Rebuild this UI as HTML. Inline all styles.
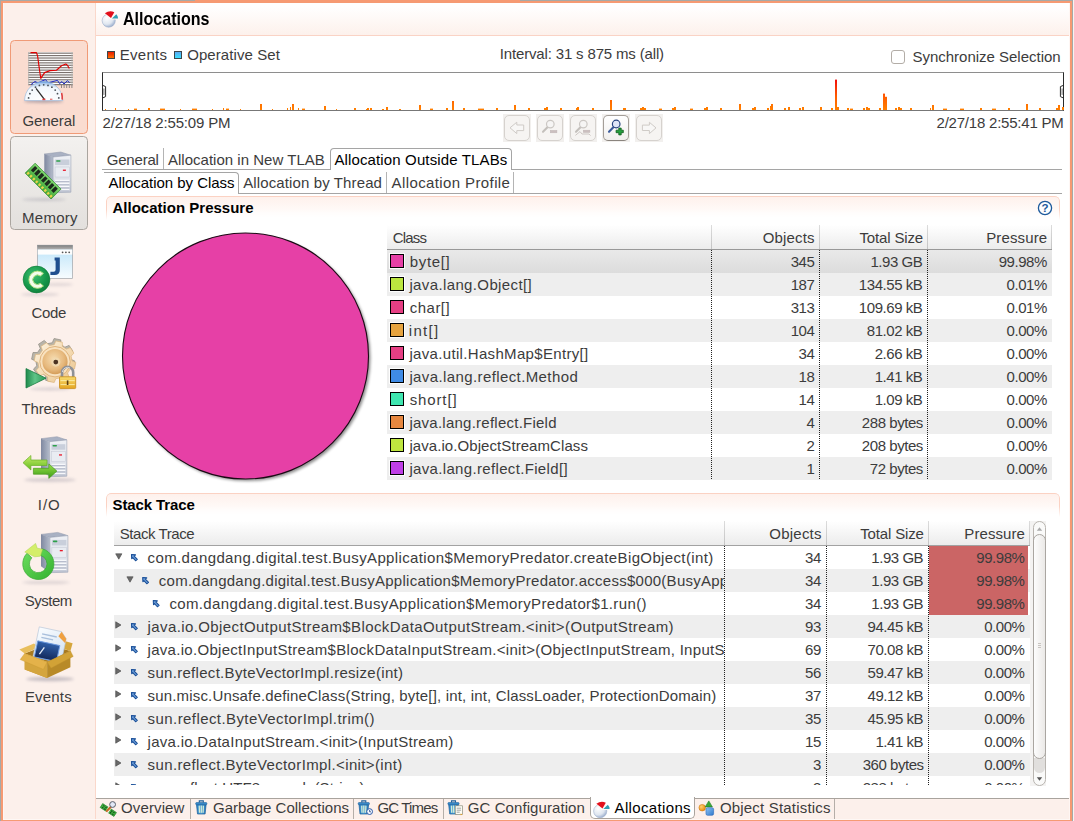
<!DOCTYPE html><html><head><meta charset="utf-8"><title>Allocations</title><style>
*{box-sizing:border-box;margin:0;padding:0}
html,body{width:1074px;height:821px;overflow:hidden}
body{position:relative;background:#fcf0eb;font-family:"Liberation Sans",sans-serif;font-size:15px;color:#3c3c3c;}
.a{position:absolute}
.t{position:absolute;white-space:nowrap;line-height:18px;height:18px}
.b{font-weight:bold;color:#000}
svg{position:absolute;overflow:visible}
</style></head><body>
<div class="a" style="left:96px;top:36px;width:973px;height:762px;background:#fff"></div>
<div class="a" style="left:96px;top:3px;width:973px;height:32px;background:linear-gradient(#ffffff 10%,#fdf1ec)"></div>
<div class="a" style="left:96px;top:35px;width:973px;height:1px;background:#fad3c5"></div>
<div class="a" style="left:95px;top:3px;width:1px;height:816px;background:#fad8cb"></div>
<div class="a" style="left:1px;top:1px;width:1072px;height:2px;background:#f69a73"></div>
<div class="a" style="left:0px;top:0px;width:1073px;height:1px;background:#a6a9a7"></div>
<div class="a" style="left:195px;top:0px;width:325px;height:1px;background:#f69a73"></div>
<div class="a" style="left:0px;top:0px;width:1px;height:821px;background:#a6a9a7"></div>
<div class="a" style="left:1px;top:1px;width:2px;height:820px;background:#f69a73"></div>
<div class="a" style="left:3px;top:3px;width:1px;height:816px;background:#fef6f3"></div>
<div class="a" style="left:1069px;top:3px;width:1px;height:816px;background:#fef6f3"></div>
<div class="a" style="left:1070px;top:1px;width:2px;height:820px;background:#f69a73"></div>
<div class="a" style="left:1072px;top:0px;width:1px;height:821px;background:#a6a9a7"></div>
<div class="a" style="left:1073px;top:0px;width:1px;height:821px;background:#f6f4f2"></div>
<div class="a" style="left:3px;top:819px;width:1067px;height:1px;background:#fef8f5"></div>
<div class="a" style="left:1px;top:820px;width:1071px;height:1px;background:#f69a73"></div>
<svg style="left:0;top:0" width="1" height="1"><defs><radialGradient id="g1" cx=".35" cy=".3" r=".8"><stop offset="0" stop-color="#fff"/><stop offset=".6" stop-color="#dfe6f0"/><stop offset="1" stop-color="#8aa0c4"/></radialGradient></defs><circle cx="108.7" cy="20.6" r="6.6" fill="url(#g1)" stroke="#9fb0cc" stroke-width=".6"/><path d="M109.9 19.400000000000002 L104.5 13.000000000000002 A9 9 0 0 1 117.9 19.400000000000002Z" fill="#fff8f5"/><path d="M111.0 18.0 L104.9 13.200000000000001 Q109.7 9.8 114.3 12.200000000000001Z" fill="#e2101c"/><path d="M111.9 18.400000000000002 L116.3 14.200000000000001 Q118.3 16.200000000000003 118.10000000000001 18.400000000000002Z" fill="#2f9fb4"/></svg>
<div class="t b" style="left:122.6px;top:8px;font-size:19px;line-height:22px;height:22px;transform-origin:0 0;transform:scaleX(.845)">Allocations</div>
<div class="a" style="left:10px;top:40px;width:78px;height:93.5px;background:#fadcd0;border:1px solid #f09a76;border-radius:4.5px"></div>
<div class="a" style="left:10px;top:136px;width:78px;height:93.5px;background:linear-gradient(#f3f1ef,#e3e0dd);border:1px solid #aaa59f;border-radius:4.5px"></div>
<svg style="left:0;top:0" width="1" height="1"><defs><radialGradient id="g2" cx=".5" cy="1" r="1"><stop offset="0" stop-color="#ffffff"/><stop offset=".72" stop-color="#f2f7fc"/><stop offset=".9" stop-color="#a9c8ec"/><stop offset="1" stop-color="#4f8cd8"/></radialGradient><filter id="f3" x="-30%" y="-100%" width="160%" height="300%"><feGaussianBlur stdDeviation="1.6"/></filter></defs><rect x="28" y="52" width="45" height="33" fill="#fff"/><rect x="28" y="52.60" width="45" height="1.15" fill="#7a726e"/><rect x="28" y="55.02" width="45" height="1.15" fill="#7a726e"/><rect x="28" y="57.44" width="45" height="1.15" fill="#7a726e"/><rect x="28" y="59.86" width="45" height="1.15" fill="#7a726e"/><rect x="28" y="62.28" width="45" height="1.15" fill="#7a726e"/><rect x="28" y="64.70" width="45" height="1.15" fill="#7a726e"/><rect x="28" y="67.12" width="45" height="1.15" fill="#7a726e"/><rect x="28" y="69.54" width="45" height="1.15" fill="#7a726e"/><rect x="28" y="71.96" width="45" height="1.15" fill="#7a726e"/><rect x="28" y="74.38" width="45" height="1.15" fill="#7a726e"/><rect x="28" y="76.80" width="45" height="1.15" fill="#7a726e"/><rect x="28" y="79.22" width="45" height="1.15" fill="#7a726e"/><rect x="28" y="81.64" width="45" height="1.15" fill="#7a726e"/><rect x="28" y="84.06" width="45" height="1.15" fill="#7a726e"/><rect x="28" y="52" width="1.2" height="33" fill="#bdb6b2" opacity=".7"/><rect x="71.5" y="52" width="1.2" height="33" fill="#bdb6b2" opacity=".7"/><rect x="61.0" y="85" width="1" height="3" fill="#8c8684"/><rect x="63.6" y="85" width="1" height="3" fill="#8c8684"/><rect x="66.2" y="85" width="1" height="3" fill="#8c8684"/><rect x="68.8" y="85" width="1" height="3" fill="#8c8684"/><rect x="71.4" y="85" width="1" height="3" fill="#8c8684"/><path d="M30.5 52.6 L36.5 52.6 L37.6 56 L39.8 72 L40.8 78.4 L44.6 72.6 L50 70.6 L56.5 70.2 L61.5 65.8 L65.8 64 L67.6 65.4 L69.3 68.6" fill="none" stroke="#e00000" stroke-width="1.15" stroke-linejoin="round"/><path d="M31 84.5 L35 81.5 L38 83 L42 81 L45.5 79.6 L48 82.8 L51 82 L55 81 L57.5 80.4 L59.5 83.6 L62 81.6 L64 84 L67.5 80.6 L69.5 82.8" fill="none" stroke="#1c28c8" stroke-width="1"/><ellipse cx="43.7" cy="101.2" rx="19.5" ry="1.6" fill="#50506a" opacity="0.45" filter="url(#f3)"/><path d="M24.6 100.6 A19.1 19.1 0 0 1 62.8 100.6Z" fill="url(#g2)" stroke="#8fb3dc" stroke-width=".6"/><circle cx="28.6" cy="97.9" r=".9" fill="#4a5058"/><circle cx="29.9" cy="93.7" r=".9" fill="#4a5058"/><circle cx="32.2" cy="90.1" r=".9" fill="#4a5058"/><circle cx="35.5" cy="87.2" r=".9" fill="#4a5058"/><circle cx="39.4" cy="85.4" r=".9" fill="#4a5058"/><circle cx="43.7" cy="84.8" r=".9" fill="#4a5058"/><circle cx="48.0" cy="85.4" r=".9" fill="#4a5058"/><circle cx="51.9" cy="87.2" r=".9" fill="#4a5058"/><circle cx="55.2" cy="90.1" r=".9" fill="#4a5058"/><circle cx="57.5" cy="93.7" r=".9" fill="#4a5058"/><circle cx="58.8" cy="97.9" r=".9" fill="#4a5058"/><path d="M61.6 93 A18 18 0 0 1 62.2 99.6" stroke="#e04040" stroke-width="1.6" fill="none"/><path d="M36 88.4 L44.4 99.4" stroke="#2a2a2a" stroke-width="1.3"/><rect x="42.4" y="98.6" width="3" height="1.6" fill="#e04040"/><rect x="50" y="98.6" width="2.4" height="1.4" fill="#e88080"/></svg>
<svg style="left:0;top:0" width="1" height="1"><defs><filter id="f4" x="-30%" y="-100%" width="160%" height="300%"><feGaussianBlur stdDeviation="1.6"/></filter><linearGradient id="g5" x1="0" x2="1"><stop offset="0" stop-color="#7f88a0"/><stop offset="1" stop-color="#b4bccb"/></linearGradient><linearGradient id="g6" x1="0" x2="0" y1="0" y2="1"><stop offset="0" stop-color="#eef0f5"/><stop offset=".6" stop-color="#dfe3ea"/><stop offset="1" stop-color="#c4c9d6"/></linearGradient><linearGradient id="g7" x1="0" x2="0" y1="0" y2="1"><stop offset="0" stop-color="#7fd870"/><stop offset="1" stop-color="#3fa838"/></linearGradient></defs><ellipse cx="44" cy="199.5" rx="22" ry="1.5" fill="#50506a" opacity="0.22" filter="url(#f4)"/><path d="M44.3 154 L60.792 152 L70.9 155.2 L53.077999999999996 157Z" fill="#a9b1c3" stroke="#8e96ab" stroke-width=".5"/><path d="M44.3 154 L53.077999999999996 157 L53.077999999999996 192.7 L44.3 186.2Z" fill="url(#g5)"/><path d="M53.077999999999996 157 L70.9 155.2 L70.9 192.2 L53.077999999999996 192.7Z" fill="url(#g6)" stroke="#9aa2b6" stroke-width=".6"/><rect x="55.077999999999996" y="159.5" width="14.32200000000001" height="5.5" fill="#c9cfdb"/><rect x="56.077999999999996" y="160.2" width="4.5" height="1.6" rx=".8" fill="#2ca04a"/><rect x="55.077999999999996" y="167" width="14.32200000000001" height="10" fill="#e9ecf2" stroke="#c3c8d4" stroke-width=".5"/><rect x="62.8801" y="169.6" width="3" height="1.3" fill="#e81828"/><rect x="55.077999999999996" y="179.7" width="14.32200000000001" height="1.5" fill="#f7f8fb"/><rect x="55.077999999999996" y="181.2" width="14.32200000000001" height=".8" fill="#aeb5c6"/><rect x="55.077999999999996" y="182.79999999999998" width="14.32200000000001" height="1.5" fill="#f7f8fb"/><rect x="55.077999999999996" y="184.29999999999998" width="14.32200000000001" height=".8" fill="#aeb5c6"/><rect x="55.077999999999996" y="185.89999999999998" width="14.32200000000001" height="1.5" fill="#f7f8fb"/><rect x="55.077999999999996" y="187.39999999999998" width="14.32200000000001" height=".8" fill="#aeb5c6"/><rect x="55.077999999999996" y="189.0" width="14.32200000000001" height="1.5" fill="#f7f8fb"/><rect x="55.077999999999996" y="190.5" width="14.32200000000001" height=".8" fill="#aeb5c6"/><g transform="translate(43.1 181.1) rotate(45)"><rect x="-18.3" y="-7" width="36.6" height="14" fill="url(#g7)" stroke="#2f8a2c" stroke-width=".7"/><rect x="-16.40" y="-5" width="3.4" height="6" fill="#1d2a1c"/><rect x="-11.60" y="-5" width="3.4" height="6" fill="#1d2a1c"/><rect x="-6.80" y="-5" width="3.4" height="6" fill="#1d2a1c"/><rect x="-2.00" y="-5" width="3.4" height="6" fill="#1d2a1c"/><rect x="2.80" y="-5" width="3.4" height="6" fill="#1d2a1c"/><rect x="7.60" y="-5" width="3.4" height="6" fill="#1d2a1c"/><rect x="12.40" y="-5" width="3.4" height="6" fill="#1d2a1c"/><rect x="-17.20" y="3.8" width="2.2" height="2.6" fill="#e8d24a"/><rect x="-13.15" y="3.8" width="2.2" height="2.6" fill="#e8d24a"/><rect x="-9.10" y="3.8" width="2.2" height="2.6" fill="#e8d24a"/><rect x="-5.05" y="3.8" width="2.2" height="2.6" fill="#e8d24a"/><rect x="-1.00" y="3.8" width="2.2" height="2.6" fill="#e8d24a"/><rect x="3.05" y="3.8" width="2.2" height="2.6" fill="#e8d24a"/><rect x="7.10" y="3.8" width="2.2" height="2.6" fill="#e8d24a"/><rect x="11.15" y="3.8" width="2.2" height="2.6" fill="#e8d24a"/><rect x="15.20" y="3.8" width="2.2" height="2.6" fill="#e8d24a"/></g></svg>
<svg style="left:0;top:0" width="1" height="1"><defs><filter id="f8" x="-30%" y="-100%" width="160%" height="300%"><feGaussianBlur stdDeviation="1.6"/></filter><filter id="f9" x="-30%" y="-100%" width="160%" height="300%"><feGaussianBlur stdDeviation="1.6"/></filter><linearGradient id="g10" x1="0" x2="0" y1="0" y2="1"><stop offset="0" stop-color="#b9e2f8"/><stop offset="1" stop-color="#f7fcff"/></linearGradient><linearGradient id="g11" x1="0" x2="0" y1="0" y2="1"><stop offset="0" stop-color="#7e7e7e"/><stop offset="1" stop-color="#b4b4b4"/></linearGradient><radialGradient id="g12" cx=".4" cy=".35" r=".75"><stop offset="0" stop-color="#3fbf72"/><stop offset=".6" stop-color="#16984a"/><stop offset="1" stop-color="#0e7a3a"/></radialGradient></defs><ellipse cx="58" cy="284.5" rx="15" ry="1.3" fill="#50506a" opacity="0.18" filter="url(#f8)"/><ellipse cx="40" cy="294.5" rx="19" ry="1.3" fill="#50506a" opacity="0.2" filter="url(#f9)"/><rect x="37.4" y="245.2" width="35.2" height="33.2" fill="url(#g10)" stroke="#a0a4a8" stroke-width=".7"/><rect x="37.4" y="245.2" width="35.2" height="4.4" fill="url(#g11)"/><rect x="37.8" y="249.6" width="34.4" height="5" fill="#fdfdfd"/><circle cx="62.6" cy="252.3" r=".9" fill="#555"/><circle cx="65.9" cy="252.3" r=".9" fill="#555"/><circle cx="69.2" cy="252.3" r=".9" fill="#555"/><path d="M54.6 257.6 L59.8 257.6 L59.8 270.2 Q59.8 275 54.6 275 L50.4 275 L50.4 271.8 L53.6 271.8 Q55.6 271.8 55.6 269.8 L55.6 260.4 L54.6 260.4Z" fill="#1f4f8f"/><circle cx="36.5" cy="279.5" r="13.4" fill="url(#g12)" stroke="#0f7a38" stroke-width=".6"/><path d="M43.4 273.4 A8.6 8.6 0 1 0 43.4 286 L40.4 283.4 A4.7 4.7 0 1 1 40.4 276Z" fill="#f4fcec" stroke="#b4e080" stroke-width="1"/></svg>
<svg style="left:0;top:0" width="1" height="1"><defs><radialGradient id="g13" cx=".45" cy=".4" r=".6"><stop offset="0" stop-color="#f6dcb0"/><stop offset=".7" stop-color="#e6b87c"/><stop offset="1" stop-color="#d49c58"/></radialGradient><linearGradient id="g14" x1="0" x2="1" y1="0" y2="1"><stop offset="0" stop-color="#fff4e0"/><stop offset="1" stop-color="#eac48c"/></linearGradient><linearGradient id="g15" x1="0" x2="1" y1="0" y2="0"><stop offset="0" stop-color="#1e8a4c"/><stop offset=".45" stop-color="#5fc487"/><stop offset="1" stop-color="#2a9a58"/></linearGradient><linearGradient id="g16" x1="0" x2="0" y1="0" y2="1"><stop offset="0" stop-color="#f8dc70"/><stop offset="1" stop-color="#e4a420"/></linearGradient><filter id="f17" x="-30%" y="-100%" width="160%" height="300%"><feGaussianBlur stdDeviation="1.6"/></filter></defs><ellipse cx="50" cy="389" rx="20" ry="1.4" fill="#50506a" opacity="0.2" filter="url(#f17)"/><path d="M74.8 361.0 L73.4 367.7 L68.9 367.7 L66.1 371.8 L67.9 376.0 L62.1 379.8 L58.9 376.5 L54.1 377.5 L52.3 381.7 L45.6 380.3 L45.6 375.8 L41.5 373.0 L37.3 374.8 L33.5 369.0 L36.8 365.8 L35.8 361.0 L31.6 359.2 L33.0 352.5 L37.5 352.5 L40.3 348.4 L38.5 344.2 L44.3 340.4 L47.5 343.7 L52.3 342.7 L54.1 338.5 L60.8 339.9 L60.8 344.4 L64.9 347.2 L69.1 345.4 L72.9 351.2 L69.6 354.4 L70.6 359.2Z" fill="#b9b5aa" stroke="#8e8a80" stroke-width=".7" stroke-linejoin="round"/><path d="M75.8 362.5 L74.5 369.0 L70.3 369.1 L67.6 373.1 L69.1 377.0 L63.6 380.6 L60.6 377.8 L55.8 378.7 L54.2 382.5 L47.7 381.2 L47.6 377.0 L43.6 374.3 L39.7 375.8 L36.1 370.3 L38.9 367.3 L38.0 362.5 L34.2 360.9 L35.5 354.4 L39.7 354.3 L42.4 350.3 L40.9 346.4 L46.4 342.8 L49.4 345.6 L54.2 344.7 L55.8 340.9 L62.3 342.2 L62.4 346.4 L66.4 349.1 L70.3 347.6 L73.9 353.1 L71.1 356.1 L72.0 360.9Z" fill="url(#g14)" stroke="#ddb47c" stroke-width=".7" stroke-linejoin="round"/><circle cx="55" cy="361.7" r="15.2" fill="#f8e2c0" stroke="#dcae74" stroke-width=".9"/><circle cx="55" cy="361.7" r="12.6" fill="url(#g13)"/><circle cx="55.8" cy="362.09999999999997" r="4.6" fill="#f0d8b0" opacity=".9"/><circle cx="55.8" cy="362.09999999999997" r="2.4" fill="#4a3222"/><path d="M26 368.6 L46 378.2 L26 388Z" fill="url(#g15)" stroke="#1d7e44" stroke-width=".8" stroke-linejoin="round"/><path d="M62 377.5 L62 372.4 A5.6 5.6 0 0 1 73.2 372.4 L73.2 377.5" fill="none" stroke="#8f9196" stroke-width="2.6"/><path d="M62.4 372 A5.2 5.2 0 0 1 70 368" fill="none" stroke="#d8dadc" stroke-width="1"/><rect x="59.5" y="376.8" width="16.2" height="11.8" rx="1" fill="url(#g16)" stroke="#c88a18" stroke-width=".8"/><path d="M60.5 380.6h14.2M60.5 384.6h14.2" stroke="#fbeaa0" stroke-width="1"/><rect x="66.8" y="380.4" width="1.6" height="4.6" fill="#5a3c10"/></svg>
<svg style="left:0;top:0" width="1" height="1"><defs><filter id="f18" x="-30%" y="-100%" width="160%" height="300%"><feGaussianBlur stdDeviation="1.6"/></filter><linearGradient id="g19" x1="0" x2="1"><stop offset="0" stop-color="#7f88a0"/><stop offset="1" stop-color="#b4bccb"/></linearGradient><linearGradient id="g20" x1="0" x2="0" y1="0" y2="1"><stop offset="0" stop-color="#eef0f5"/><stop offset=".6" stop-color="#dfe3ea"/><stop offset="1" stop-color="#c4c9d6"/></linearGradient><linearGradient id="g21" x1="0" x2="0" y1="0" y2="1"><stop offset="0" stop-color="#c8ec68"/><stop offset="1" stop-color="#62bc20"/></linearGradient><linearGradient id="g22" x1="0" x2="0" y1="0" y2="1"><stop offset="0" stop-color="#98e048"/><stop offset="1" stop-color="#3e9e18"/></linearGradient></defs><ellipse cx="50" cy="480" rx="26" ry="2" fill="#50506a" opacity="0.22" filter="url(#f18)"/><path d="M41 438.7 L56.996 436.7 L66.8 439.9 L49.514 441.7Z" fill="#a9b1c3" stroke="#8e96ab" stroke-width=".5"/><path d="M41 438.7 L49.514 441.7 L49.514 476.7 L41 470.2Z" fill="url(#g19)"/><path d="M49.514 441.7 L66.8 439.9 L66.8 476.2 L49.514 476.7Z" fill="url(#g20)" stroke="#9aa2b6" stroke-width=".6"/><rect x="51.514" y="444.2" width="13.785999999999994" height="5.5" fill="#c9cfdb"/><rect x="52.514" y="444.9" width="4.5" height="1.6" rx=".8" fill="#2ca04a"/><rect x="51.514" y="451.7" width="13.785999999999994" height="10" fill="#e9ecf2" stroke="#c3c8d4" stroke-width=".5"/><rect x="59.0213" y="454.3" width="3" height="1.3" fill="#e81828"/><rect x="51.514" y="463.7" width="13.785999999999994" height="1.5" fill="#f7f8fb"/><rect x="51.514" y="465.2" width="13.785999999999994" height=".8" fill="#aeb5c6"/><rect x="51.514" y="466.8" width="13.785999999999994" height="1.5" fill="#f7f8fb"/><rect x="51.514" y="468.3" width="13.785999999999994" height=".8" fill="#aeb5c6"/><rect x="51.514" y="469.9" width="13.785999999999994" height="1.5" fill="#f7f8fb"/><rect x="51.514" y="471.4" width="13.785999999999994" height=".8" fill="#aeb5c6"/><rect x="51.514" y="473.0" width="13.785999999999994" height="1.5" fill="#f7f8fb"/><rect x="51.514" y="474.5" width="13.785999999999994" height=".8" fill="#aeb5c6"/><path d="M47 460 L30.9 460 L30.9 455.5 L23 462.7 L30.9 470 L30.9 465.5 L47 465.5Z" fill="url(#g21)" stroke="#6ab02a" stroke-width=".7" stroke-linejoin="round"/><path d="M33.4 468.3 L48.8 468.3 L48.8 463.9 L56.9 471.1 L48.8 478.4 L48.8 474.2 L33.4 474.2Z" fill="url(#g22)" stroke="#4a9a1c" stroke-width=".7" stroke-linejoin="round"/></svg>
<svg style="left:0;top:0" width="1" height="1"><defs><filter id="f23" x="-30%" y="-100%" width="160%" height="300%"><feGaussianBlur stdDeviation="1.6"/></filter><linearGradient id="g24" x1="0" x2="1"><stop offset="0" stop-color="#7f88a0"/><stop offset="1" stop-color="#b4bccb"/></linearGradient><linearGradient id="g25" x1="0" x2="0" y1="0" y2="1"><stop offset="0" stop-color="#eef0f5"/><stop offset=".6" stop-color="#dfe3ea"/><stop offset="1" stop-color="#c4c9d6"/></linearGradient><linearGradient id="g26" x1="0" x2="1" y1="0" y2="1"><stop offset="0" stop-color="#6ee060"/><stop offset="1" stop-color="#34b030"/></linearGradient></defs><ellipse cx="46" cy="582.5" rx="24" ry="1.6" fill="#50506a" opacity="0.18" filter="url(#f23)"/><path d="M41 534.4 L57.678 532.4 L67.9 535.6 L49.877 537.4Z" fill="#a9b1c3" stroke="#8e96ab" stroke-width=".5"/><path d="M41 534.4 L49.877 537.4 L49.877 572.6999999999999 L41 566.1999999999999Z" fill="url(#g24)"/><path d="M49.877 537.4 L67.9 535.6 L67.9 572.1999999999999 L49.877 572.6999999999999Z" fill="url(#g25)" stroke="#9aa2b6" stroke-width=".6"/><rect x="51.877" y="539.9" width="14.523000000000003" height="5.5" fill="#c9cfdb"/><rect x="52.877" y="540.6" width="4.5" height="1.6" rx=".8" fill="#2ca04a"/><rect x="51.877" y="547.4" width="14.523000000000003" height="10" fill="#e9ecf2" stroke="#c3c8d4" stroke-width=".5"/><rect x="59.78965000000001" y="550.0" width="3" height="1.3" fill="#e81828"/><rect x="51.877" y="559.6999999999999" width="14.523000000000003" height="1.5" fill="#f7f8fb"/><rect x="51.877" y="561.1999999999999" width="14.523000000000003" height=".8" fill="#aeb5c6"/><rect x="51.877" y="562.8" width="14.523000000000003" height="1.5" fill="#f7f8fb"/><rect x="51.877" y="564.3" width="14.523000000000003" height=".8" fill="#aeb5c6"/><rect x="51.877" y="565.9" width="14.523000000000003" height="1.5" fill="#f7f8fb"/><rect x="51.877" y="567.4" width="14.523000000000003" height=".8" fill="#aeb5c6"/><rect x="51.877" y="568.9999999999999" width="14.523000000000003" height="1.5" fill="#f7f8fb"/><rect x="51.877" y="570.4999999999999" width="14.523000000000003" height=".8" fill="#aeb5c6"/><path d="M27.000000000000004 553.1999999999999 A15.6 15.6 0 1 0 42.2 548.8 L40.6 555.4 A8.8 8.8 0 1 1 31.800000000000004 557.8Z" fill="url(#g26)" stroke="#3aa634" stroke-width=".7" stroke-linejoin="round"/><path d="M24.800000000000004 552.0 L35.6 543.4 L37.2 548.1999999999999 L42.6 549.1999999999999 L40.400000000000006 556.1999999999999 L34.6 556.8Z" fill="#d4ee6a" stroke="#a8d24a" stroke-width=".5" stroke-linejoin="round"/></svg>
<svg style="left:0;top:0" width="1" height="1"><defs><filter id="f27" x="-30%" y="-100%" width="160%" height="300%"><feGaussianBlur stdDeviation="1.6"/></filter><linearGradient id="g28" x1="0" x2="1" y1="0" y2="1"><stop offset="0" stop-color="#fbfdff"/><stop offset="1" stop-color="#cfe0f2"/></linearGradient><linearGradient id="g29" x1="0" x2="0" y1="0" y2="1"><stop offset="0" stop-color="#2f5fa8"/><stop offset="1" stop-color="#13285a"/></linearGradient><linearGradient id="g30" x1="0" x2="0" y1="0" y2="1"><stop offset="0" stop-color="#d9aa44"/><stop offset="1" stop-color="#c08f2a"/></linearGradient></defs><ellipse cx="50" cy="679" rx="24" ry="2.2" fill="#50506a" opacity="0.3" filter="url(#f27)"/><path d="M24.7 653.4 L47.8 644.6 L70.4 651 L47.1 662Z" fill="#a87a20"/><path d="M24.7 653.4 L19.4 649.4 L34 643.6 L38.6 647.6Z" fill="#e8be5c"/><path d="M70.4 651 L72.6 643.2 L64.6 641 L62.4 648.4Z" fill="#d6a63c"/><g transform="rotate(12 50 640)"><path d="M36.8 629.4 L59.6 629.4 L65.6 635.4 L65.6 660 L36.8 660Z" fill="url(#g28)" stroke="#b4c4d8" stroke-width=".6"/><path d="M59.6 629.4 L65.6 635.4 L65.6 640 L57.4 634.6Z" fill="#f0a040"/><path d="M41 635.6h15M41 639.2h12" stroke="#a8bfdc" stroke-width="1.4"/><rect x="38.2" y="643.4" width="22.6" height="16.4" fill="url(#g29)" stroke="#6f9be0" stroke-width=".9"/><path d="M42.6 656 L46 648.4" stroke="#e8eef8" stroke-width="1.3"/></g><path d="M24.7 661.5 L47.1 670 L47.1 677.9 L24.7 669.6Z" fill="url(#g30)"/><path d="M24.7 653.4 L47.1 662 L47.1 677.9 L24.7 669.6Z" fill="#d4a53e"/><path d="M47.1 662 L70.4 651 L70.4 667.2 L47.1 677.9Z" fill="#b88a28"/><path d="M24.7 653.4 L47.1 662 L43.4 669.4 L20.2 659.6Z" fill="#e4b24a" stroke="#c8982e" stroke-width=".4"/><path d="M47.1 662 L70.4 651 L73.2 656.4 L51 668.2Z" fill="#d2a236" stroke="#b88a28" stroke-width=".4"/></svg>
<div class="t" style="left:22.50px;top:111.90px;letter-spacing:-0.105px;">General</div>
<div class="t" style="left:22.00px;top:209.00px;letter-spacing:0.286px;">Memory</div>
<div class="t" style="left:31.50px;top:303.80px;letter-spacing:-0.372px;">Code</div>
<div class="t" style="left:21.40px;top:399.80px;letter-spacing:-0.121px;">Threads</div>
<div class="t" style="left:37.70px;top:495.80px;letter-spacing:1.033px;">I/O</div>
<div class="t" style="left:24.70px;top:591.80px;letter-spacing:-0.483px;">System</div>
<div class="t" style="left:24.90px;top:687.80px;letter-spacing:0.189px;">Events</div>
<div class="a" style="left:107px;top:51px;width:8px;height:8px;background:linear-gradient(#e81c00,#ff7200);border:1px solid #3c464a"></div>
<div class="t" style="left:119.80px;top:46.40px;letter-spacing:0.249px;">Events</div>
<div class="a" style="left:174px;top:51px;width:8px;height:8px;background:linear-gradient(#5aa8f0,#38e0ff);border:1px solid #3c464a"></div>
<div class="t" style="left:187.20px;top:46.40px;letter-spacing:0.079px;">Operative Set</div>
<div class="t" style="left:499.80px;top:44.60px;letter-spacing:-0.158px;">Interval: 31 s 875 ms (all)</div>
<div class="a" style="left:891px;top:50px;width:14px;height:14px;background:#fff;border:1px solid #b3ada7;border-radius:3px"></div>
<div class="t" style="left:912.50px;top:48.00px;letter-spacing:-0.014px;">Synchronize Selection</div>
<div class="a" style="left:102px;top:72px;width:962px;height:39px;background:#fff;border-top:1px solid #8e8e8e;border-left:1px solid #2a2a2a;border-bottom:1px solid #777;border-right:1px solid #2a2a2a"></div>
<svg style="left:0;top:0" width="1" height="1"><defs><linearGradient id="g31" gradientUnits="userSpaceOnUse" x1="0" x2="0" y1="79" y2="110"><stop offset="0" stop-color="#f00a0a"/><stop offset=".55" stop-color="#ff5a00"/><stop offset="1" stop-color="#ff8000"/></linearGradient></defs><rect x="105" y="109" width="1" height="1" fill="url(#g31)"/><rect x="115" y="108" width="1" height="2" fill="url(#g31)"/><rect x="128" y="109" width="1" height="1" fill="url(#g31)"/><rect x="134" y="108.6" width="3" height="1.4" fill="url(#g31)"/><rect x="148" y="108" width="2" height="2" fill="url(#g31)"/><rect x="160" y="108.6" width="5" height="1.4" fill="url(#g31)"/><rect x="180" y="109" width="1" height="1" fill="url(#g31)"/><rect x="192" y="108.6" width="5" height="1.4" fill="url(#g31)"/><rect x="212" y="109" width="1" height="1" fill="url(#g31)"/><rect x="223" y="108" width="1" height="2" fill="url(#g31)"/><rect x="226" y="108.6" width="3" height="1.4" fill="url(#g31)"/><rect x="240" y="109" width="1" height="1" fill="url(#g31)"/><rect x="260" y="104" width="2" height="6" fill="url(#g31)"/><rect x="272" y="109" width="1" height="1" fill="url(#g31)"/><rect x="287" y="108" width="1" height="2" fill="url(#g31)"/><rect x="290" y="107" width="1" height="3" fill="url(#g31)"/><rect x="292" y="104" width="2" height="6" fill="url(#g31)"/><rect x="298" y="108" width="1" height="2" fill="url(#g31)"/><rect x="302" y="108.6" width="3" height="1.4" fill="url(#g31)"/><rect x="324" y="106" width="2" height="4" fill="url(#g31)"/><rect x="336" y="109" width="1" height="1" fill="url(#g31)"/><rect x="354" y="108" width="2" height="2" fill="url(#g31)"/><rect x="366" y="109" width="1" height="1" fill="url(#g31)"/><rect x="367" y="108" width="2" height="2" fill="url(#g31)"/><rect x="370" y="108" width="2" height="2" fill="url(#g31)"/><rect x="382" y="109" width="2" height="1" fill="url(#g31)"/><rect x="386" y="107" width="2" height="3" fill="url(#g31)"/><rect x="399" y="109" width="2" height="1" fill="url(#g31)"/><rect x="419" y="105" width="2" height="5" fill="url(#g31)"/><rect x="430" y="108.6" width="3" height="1.4" fill="url(#g31)"/><rect x="446" y="108" width="2" height="2" fill="url(#g31)"/><rect x="452" y="101" width="2" height="9" fill="url(#g31)"/><rect x="463" y="108" width="2" height="2" fill="url(#g31)"/><rect x="478" y="108.6" width="6" height="1.4" fill="url(#g31)"/><rect x="496" y="108" width="2" height="2" fill="url(#g31)"/><rect x="514" y="105" width="2" height="5" fill="url(#g31)"/><rect x="528" y="108" width="2" height="2" fill="url(#g31)"/><rect x="544" y="108" width="2" height="2" fill="url(#g31)"/><rect x="546" y="107" width="2" height="3" fill="url(#g31)"/><rect x="560" y="108" width="2" height="2" fill="url(#g31)"/><rect x="576" y="108" width="2" height="2" fill="url(#g31)"/><rect x="577" y="107" width="2" height="3" fill="url(#g31)"/><rect x="592" y="108" width="2" height="2" fill="url(#g31)"/><rect x="610" y="100" width="2" height="10" fill="url(#g31)"/><rect x="624" y="108" width="2" height="2" fill="url(#g31)"/><rect x="623" y="108" width="2" height="2" fill="url(#g31)"/><rect x="640" y="108" width="2" height="2" fill="url(#g31)"/><rect x="642" y="107" width="2" height="3" fill="url(#g31)"/><rect x="644" y="108" width="2" height="2" fill="url(#g31)"/><rect x="659" y="108.6" width="3" height="1.4" fill="url(#g31)"/><rect x="672" y="108" width="2" height="2" fill="url(#g31)"/><rect x="674" y="107" width="2" height="3" fill="url(#g31)"/><rect x="690" y="108.6" width="3" height="1.4" fill="url(#g31)"/><rect x="704" y="108" width="2" height="2" fill="url(#g31)"/><rect x="706" y="107" width="2" height="3" fill="url(#g31)"/><rect x="720" y="108" width="2" height="2" fill="url(#g31)"/><rect x="739" y="104" width="2" height="6" fill="url(#g31)"/><rect x="752" y="108" width="2" height="2" fill="url(#g31)"/><rect x="754" y="107" width="2" height="3" fill="url(#g31)"/><rect x="767" y="108" width="2" height="2" fill="url(#g31)"/><rect x="770" y="106" width="2" height="4" fill="url(#g31)"/><rect x="771" y="104" width="2" height="6" fill="url(#g31)"/><rect x="784" y="108" width="2" height="2" fill="url(#g31)"/><rect x="788" y="107" width="2" height="3" fill="url(#g31)"/><rect x="799" y="108" width="2" height="2" fill="url(#g31)"/><rect x="802" y="107" width="2" height="3" fill="url(#g31)"/><rect x="820" y="107" width="2" height="3" fill="url(#g31)"/><rect x="831" y="108" width="2" height="2" fill="url(#g31)"/><rect x="835" y="79.6" width="2" height="30.4" fill="url(#g31)"/><rect x="837" y="107" width="2" height="3" fill="url(#g31)"/><rect x="847" y="108" width="2" height="2" fill="url(#g31)"/><rect x="850" y="108.6" width="3" height="1.4" fill="url(#g31)"/><rect x="863" y="108" width="2" height="2" fill="url(#g31)"/><rect x="866" y="107" width="2" height="3" fill="url(#g31)"/><rect x="868" y="108" width="2" height="2" fill="url(#g31)"/><rect x="879" y="108" width="2" height="2" fill="url(#g31)"/><rect x="883" y="93.6" width="2" height="16.4" fill="url(#g31)"/><rect x="885" y="96.8" width="2" height="13.2" fill="url(#g31)"/><rect x="895" y="108" width="2" height="2" fill="url(#g31)"/><rect x="898" y="107" width="2" height="3" fill="url(#g31)"/><rect x="900" y="108" width="2" height="2" fill="url(#g31)"/><rect x="910" y="108" width="2" height="2" fill="url(#g31)"/><rect x="930" y="108" width="1" height="2" fill="url(#g31)"/><rect x="932" y="105" width="2" height="5" fill="url(#g31)"/><rect x="943" y="108.6" width="4" height="1.4" fill="url(#g31)"/><rect x="960" y="108.6" width="4" height="1.4" fill="url(#g31)"/><rect x="980" y="108" width="2" height="2" fill="url(#g31)"/><rect x="992" y="108.6" width="4" height="1.4" fill="url(#g31)"/><rect x="1008" y="108" width="2" height="2" fill="url(#g31)"/><rect x="1026" y="104" width="2" height="6" fill="url(#g31)"/><rect x="1039" y="108" width="2" height="2" fill="url(#g31)"/><rect x="1056" y="108" width="2" height="2" fill="url(#g31)"/><rect x="1058" y="105" width="2" height="5" fill="url(#g31)"/><rect x="1062" y="107" width="2" height="3" fill="url(#g31)"/><path d="M103 85.5 L105.6 86.6 L105.6 96.6 L103 97.8" fill="#fff" stroke="#2a2a2a" stroke-width="1"/><path d="M103.9 88.5v6.4" stroke="#555" stroke-width=".8"/><path d="M1063 85.5 L1060.4 86.6 L1060.4 96.6 L1063 97.8" fill="#fff" stroke="#2a2a2a" stroke-width="1"/><path d="M1062.1 88.5v6.4" stroke="#555" stroke-width=".8"/></svg>
<div class="t" style="left:102.50px;top:114.00px;letter-spacing:-0.173px;">2/27/18 2:55:09 PM</div>
<div class="t" style="left:936.50px;top:114.00px;letter-spacing:-0.214px;">2/27/18 2:55:41 PM</div>
<div class="a" style="left:503px;top:114px;width:28px;height:28px;background:#f2f0ee"></div>
<div class="a" style="left:504px;top:115px;width:26px;height:26px;background:#f6f4f2;border:1px solid #d6d2ce;border-radius:5px"></div>
<svg style="left:0;top:0" width="1" height="1"><path d="M510 127.8 L516.8 122.2 L516.8 125 L523.7 125 L523.7 130.6 L516.8 130.6 L516.8 133.6Z" fill="#f8f7f6" stroke="#cfcbc7" stroke-width="1" stroke-linejoin="round"/></svg>
<div class="a" style="left:536px;top:114px;width:28px;height:28px;background:#f2f0ee"></div>
<div class="a" style="left:537px;top:115px;width:26px;height:26px;background:#f6f4f2;border:1px solid #d6d2ce;border-radius:5px"></div>
<svg style="left:0;top:0" width="1" height="1"><path d="M547.6999999999999 127.1 L543 131.8" stroke="#c4c0bc" stroke-width="2.1" stroke-linecap="round"/><circle cx="550.3" cy="124.1" r="3.8" fill="#f6f5f4" stroke="#cbc7c3" stroke-width="1.2"/><rect x="550.3" y="130.4" width="6.6" height="2.4" fill="#cbbfbf" stroke="#c0b6b6" stroke-width=".5"/></svg>
<div class="a" style="left:569px;top:114px;width:28px;height:28px;background:#f2f0ee"></div>
<div class="a" style="left:570px;top:115px;width:26px;height:26px;background:#f6f4f2;border:1px solid #d6d2ce;border-radius:5px"></div>
<svg style="left:0;top:0" width="1" height="1"><path d="M580.6999999999999 127.1 L576 131.8" stroke="#c4c0bc" stroke-width="2.1" stroke-linecap="round"/><circle cx="583.3" cy="124.1" r="3.8" fill="#f6f5f4" stroke="#cbc7c3" stroke-width="1.2"/><rect x="583.3" y="130.2" width="6.6" height="2.2" fill="#cbbfbf" stroke="#c0b6b6" stroke-width=".5"/><path d="M575.4 135.4 L580 131.6 L582 134 L589 134 L590.6 135.6" fill="none" stroke="#c8c2be" stroke-width=".9"/></svg>
<div class="a" style="left:602px;top:114px;width:28px;height:28px;background:#f2f0ee"></div>
<div class="a" style="left:603px;top:115px;width:26px;height:26px;background:linear-gradient(#ffffff,#f1efed);border:1px solid #a49e98;border-bottom-color:#8a847e;border-radius:5px"></div>
<svg style="left:0;top:0" width="1" height="1"><path d="M613.6 127 L609 131.8" stroke="#3d5c9c" stroke-width="2.1" stroke-linecap="round"/><circle cx="616.2" cy="124" r="3.8" fill="#dfe5f7" stroke="#27437f" stroke-width="1.2"/><path d="M618.2 130.2h2.7v-2.1h2.4v2.1h2.1v2.5h-2.1v2.2h-2.4v-2.2h-2.7Z" transform="translate(-2.1 0)" fill="#23a03c" stroke="#0f5a1c" stroke-width=".8" stroke-linejoin="round"/></svg>
<div class="a" style="left:635px;top:114px;width:28px;height:28px;background:#f2f0ee"></div>
<div class="a" style="left:636px;top:115px;width:26px;height:26px;background:#f6f4f2;border:1px solid #d6d2ce;border-radius:5px"></div>
<svg style="left:0;top:0" width="1" height="1"><path d="M656 127.9 L649.4 122.3 L649.4 125.1 L642.4 125.1 L642.4 130.5 L649.4 130.5 L649.4 133.6Z" fill="#f8f7f6" stroke="#cfcbc7" stroke-width="1" stroke-linejoin="round"/></svg>
<div class="a" style="left:102px;top:169px;width:960px;height:1px;background:#a5a5a5"></div>
<div class="t" style="left:106.70px;top:151.20px;letter-spacing:-0.189px;">General</div>
<div class="a" style="left:163px;top:148px;width:1px;height:21px;background:#b4b4b4"></div>
<div class="t" style="left:167.90px;top:151.20px;letter-spacing:0.022px;">Allocation in New TLAB</div>
<div class="a" style="left:330px;top:148px;width:182px;height:22px;background:#fff;border:1px solid #a5a5a5;border-bottom:none;border-radius:4px 4px 0 0"></div>
<div class="t" style="left:334.40px;top:151.20px;letter-spacing:0.136px;color:#000;">Allocation Outside TLABs</div>
<div class="a" style="left:238px;top:193px;width:824px;height:1px;background:#a5a5a5"></div>
<div class="a" style="left:104px;top:172px;width:135px;height:22px;background:#fff;border:1px solid #a5a5a5;border-left:none;border-bottom:none;border-radius:0 4px 0 0"></div>
<div class="t" style="left:108.50px;top:174.40px;letter-spacing:-0.040px;color:#000;">Allocation by Class</div>
<div class="t" style="left:243.20px;top:174.40px;letter-spacing:0.121px;">Allocation by Thread</div>
<div class="a" style="left:386px;top:172px;width:1px;height:21px;background:#b4b4b4"></div>
<div class="t" style="left:391.60px;top:174.40px;letter-spacing:0.389px;">Allocation Profile</div>
<div class="a" style="left:513px;top:172px;width:1px;height:21px;background:#b4b4b4"></div>
<div class="a" style="left:106px;top:196px;width:954px;height:24px;background:linear-gradient(#fef1ec,#fffaf8 60%,#ffffff);border:1px solid #fbd2c3;border-bottom:none;border-radius:5px 5px 0 0;-webkit-mask-image:linear-gradient(#000 55%,transparent);mask-image:linear-gradient(#000 55%,transparent)"></div>
<div class="t b" style="left:112.50px;top:198.60px;letter-spacing:0.009px;">Allocation Pressure</div>
<svg style="left:0;top:0" width="1" height="1"><circle cx="1045" cy="208" r="6.6" fill="#fdfeff" stroke="#1d5a9c" stroke-width="1.3"/><text x="1045" y="212.2" font-family="Liberation Sans" font-weight="bold" font-size="11.5" fill="#1d5a9c" text-anchor="middle">?</text></svg>
<svg style="left:110px;top:222px" width="272" height="272" viewBox="110 222 272 272"><defs><filter id="sh" x="-10%" y="-10%" width="125%" height="125%"><feGaussianBlur stdDeviation="1.6"/></filter></defs><circle cx="247.5" cy="358" r="123" fill="#000" opacity=".45" filter="url(#sh)"/><circle cx="245.5" cy="356" r="123" fill="#e640a6" stroke="#1a0a14" stroke-width="1.1"/></svg>
<div class="a" style="left:387px;top:225px;width:665px;height:24px;background:linear-gradient(#ffffff,#ececec)"></div>
<div class="a" style="left:387px;top:249px;width:665px;height:1px;background:#989898"></div>
<div class="t" style="left:392.75px;top:228.50px;letter-spacing:-0.814px;">Class</div>
<div class="t" style="left:762.70px;top:228.50px;letter-spacing:0.175px;">Objects</div>
<div class="t" style="left:859.40px;top:228.50px;letter-spacing:-0.143px;">Total Size</div>
<div class="t" style="left:986.20px;top:228.50px;letter-spacing:0.131px;">Pressure</div>
<div class="a" style="left:387px;top:250px;width:665px;height:23px;background:linear-gradient(#e9e9e9,#dcdcdc)"></div>
<div class="a" style="left:389px;top:253px;width:16px;height:16px;background:#e640a6;border:1px solid #000;outline:0;box-shadow:0 0 0 1px rgba(255,255,255,.9);width:14px;height:14px;margin:1px"></div>
<div class="t" style="left:409.75px;top:253.00px;letter-spacing:0.646px;">byte[]</div>
<div class="t" style="left:790.72px;top:253.00px;letter-spacing:-0.450px;">345</div>
<div class="t" style="left:870.47px;top:253.00px;letter-spacing:-0.450px;">1.93 GB</div>
<div class="t" style="left:998.71px;top:253.00px;letter-spacing:-0.450px;">99.98%</div>
<div class="a" style="left:387px;top:273px;width:665px;height:23px;background:#eeeeee"></div>
<div class="a" style="left:389px;top:276px;width:16px;height:16px;background:#bbe63f;border:1px solid #000;outline:0;box-shadow:0 0 0 1px rgba(255,255,255,.9);width:14px;height:14px;margin:1px"></div>
<div class="t" style="left:409.40px;top:276.00px;letter-spacing:0.375px;">java.lang.Object[]</div>
<div class="t" style="left:790.72px;top:276.00px;letter-spacing:-0.450px;">187</div>
<div class="t" style="left:858.85px;top:276.00px;letter-spacing:-0.450px;">134.55 kB</div>
<div class="t" style="left:1006.61px;top:276.00px;letter-spacing:-0.450px;">0.01%</div>
<div class="a" style="left:389px;top:299px;width:16px;height:16px;background:#e63f83;border:1px solid #000;outline:0;box-shadow:0 0 0 1px rgba(255,255,255,.9);width:14px;height:14px;margin:1px"></div>
<div class="t" style="left:409.75px;top:299.00px;letter-spacing:0.481px;">char[]</div>
<div class="t" style="left:790.72px;top:299.00px;letter-spacing:-0.450px;">313</div>
<div class="t" style="left:858.85px;top:299.00px;letter-spacing:-0.450px;">109.69 kB</div>
<div class="t" style="left:1006.61px;top:299.00px;letter-spacing:-0.450px;">0.01%</div>
<div class="a" style="left:387px;top:319px;width:665px;height:23px;background:#eeeeee"></div>
<div class="a" style="left:389px;top:322px;width:16px;height:16px;background:#e6a33f;border:1px solid #000;outline:0;box-shadow:0 0 0 1px rgba(255,255,255,.9);width:14px;height:14px;margin:1px"></div>
<div class="t" style="left:408.75px;top:322.00px;letter-spacing:1.310px;">int[]</div>
<div class="t" style="left:790.72px;top:322.00px;letter-spacing:-0.450px;">104</div>
<div class="t" style="left:866.75px;top:322.00px;letter-spacing:-0.450px;">81.02 kB</div>
<div class="t" style="left:1006.61px;top:322.00px;letter-spacing:-0.450px;">0.00%</div>
<div class="a" style="left:389px;top:345px;width:16px;height:16px;background:#e63f83;border:1px solid #000;outline:0;box-shadow:0 0 0 1px rgba(255,255,255,.9);width:14px;height:14px;margin:1px"></div>
<div class="t" style="left:409.40px;top:345.00px;letter-spacing:0.332px;">java.util.HashMap$Entry[]</div>
<div class="t" style="left:798.61px;top:345.00px;letter-spacing:-0.450px;">34</div>
<div class="t" style="left:874.64px;top:345.00px;letter-spacing:-0.450px;">2.66 kB</div>
<div class="t" style="left:1006.61px;top:345.00px;letter-spacing:-0.450px;">0.00%</div>
<div class="a" style="left:387px;top:365px;width:665px;height:23px;background:#eeeeee"></div>
<div class="a" style="left:389px;top:368px;width:16px;height:16px;background:#3f8be6;border:1px solid #000;outline:0;box-shadow:0 0 0 1px rgba(255,255,255,.9);width:14px;height:14px;margin:1px"></div>
<div class="t" style="left:409.40px;top:368.00px;letter-spacing:0.395px;">java.lang.reflect.Method</div>
<div class="t" style="left:798.61px;top:368.00px;letter-spacing:-0.450px;">18</div>
<div class="t" style="left:874.64px;top:368.00px;letter-spacing:-0.450px;">1.41 kB</div>
<div class="t" style="left:1006.61px;top:368.00px;letter-spacing:-0.450px;">0.00%</div>
<div class="a" style="left:389px;top:391px;width:16px;height:16px;background:#3fe6b0;border:1px solid #000;outline:0;box-shadow:0 0 0 1px rgba(255,255,255,.9);width:14px;height:14px;margin:1px"></div>
<div class="t" style="left:409.75px;top:391.00px;letter-spacing:0.856px;">short[]</div>
<div class="t" style="left:798.61px;top:391.00px;letter-spacing:-0.450px;">14</div>
<div class="t" style="left:874.64px;top:391.00px;letter-spacing:-0.450px;">1.09 kB</div>
<div class="t" style="left:1006.61px;top:391.00px;letter-spacing:-0.450px;">0.00%</div>
<div class="a" style="left:387px;top:411px;width:665px;height:23px;background:#eeeeee"></div>
<div class="a" style="left:389px;top:414px;width:16px;height:16px;background:#e6873f;border:1px solid #000;outline:0;box-shadow:0 0 0 1px rgba(255,255,255,.9);width:14px;height:14px;margin:1px"></div>
<div class="t" style="left:409.40px;top:414.00px;letter-spacing:0.246px;">java.lang.reflect.Field</div>
<div class="t" style="left:806.50px;top:414.00px;letter-spacing:-0.450px;">4</div>
<div class="t" style="left:861.85px;top:414.00px;letter-spacing:-0.450px;">288 bytes</div>
<div class="t" style="left:1006.61px;top:414.00px;letter-spacing:-0.450px;">0.00%</div>
<div class="a" style="left:389px;top:437px;width:16px;height:16px;background:#bfe63f;border:1px solid #000;outline:0;box-shadow:0 0 0 1px rgba(255,255,255,.9);width:14px;height:14px;margin:1px"></div>
<div class="t" style="left:409.40px;top:437.00px;letter-spacing:0.074px;">java.io.ObjectStreamClass</div>
<div class="t" style="left:806.50px;top:437.00px;letter-spacing:-0.450px;">2</div>
<div class="t" style="left:861.85px;top:437.00px;letter-spacing:-0.450px;">208 bytes</div>
<div class="t" style="left:1006.61px;top:437.00px;letter-spacing:-0.450px;">0.00%</div>
<div class="a" style="left:387px;top:457px;width:665px;height:23px;background:#eeeeee"></div>
<div class="a" style="left:389px;top:460px;width:16px;height:16px;background:#bf3fe6;border:1px solid #000;outline:0;box-shadow:0 0 0 1px rgba(255,255,255,.9);width:14px;height:14px;margin:1px"></div>
<div class="t" style="left:409.40px;top:460.00px;letter-spacing:0.337px;">java.lang.reflect.Field[]</div>
<div class="t" style="left:806.50px;top:460.00px;letter-spacing:-0.450px;">1</div>
<div class="t" style="left:869.75px;top:460.00px;letter-spacing:-0.450px;">72 bytes</div>
<div class="t" style="left:1006.61px;top:460.00px;letter-spacing:-0.450px;">0.00%</div>
<div class="a" style="left:711px;top:225px;width:1px;height:24px;background:linear-gradient(#dcdcdc,#c4c4c4)"></div>
<div class="a" style="left:711px;top:250px;width:1px;height:230px;background:repeating-linear-gradient(#222 0 1px,transparent 1px 2px)"></div>
<div class="a" style="left:819px;top:225px;width:1px;height:24px;background:linear-gradient(#dcdcdc,#c4c4c4)"></div>
<div class="a" style="left:819px;top:250px;width:1px;height:230px;background:repeating-linear-gradient(#222 0 1px,transparent 1px 2px)"></div>
<div class="a" style="left:927px;top:225px;width:1px;height:24px;background:linear-gradient(#dcdcdc,#c4c4c4)"></div>
<div class="a" style="left:927px;top:250px;width:1px;height:230px;background:repeating-linear-gradient(#222 0 1px,transparent 1px 2px)"></div>
<div class="a" style="left:1051px;top:225px;width:1px;height:24px;background:linear-gradient(#dcdcdc,#c4c4c4)"></div>
<div class="a" style="left:106px;top:493px;width:954px;height:24px;background:linear-gradient(#fef1ec,#fffaf8 60%,#ffffff);border:1px solid #fbd2c3;border-bottom:none;border-radius:5px 5px 0 0;-webkit-mask-image:linear-gradient(#000 55%,transparent);mask-image:linear-gradient(#000 55%,transparent)"></div>
<div class="t b" style="left:112.50px;top:495.60px;letter-spacing:-0.105px;">Stack Trace</div>
<div class="a" style="left:114px;top:521px;width:916px;height:24px;background:linear-gradient(#ffffff,#ececec)"></div>
<div class="a" style="left:114px;top:545px;width:916px;height:1px;background:#a2a2a2"></div>
<div class="t" style="left:119.70px;top:524.80px;letter-spacing:-0.433px;">Stack Trace</div>
<div class="t" style="left:769.30px;top:524.80px;letter-spacing:0.225px;">Objects</div>
<div class="t" style="left:860.20px;top:524.80px;letter-spacing:-0.143px;">Total Size</div>
<div class="t" style="left:964.30px;top:524.80px;letter-spacing:0.089px;">Pressure</div>
<div class="a" style="left:0;top:546px;width:1030px;height:239.4px;overflow:hidden">
<div class="a" style="left:929px;top:0px;width:99px;height:23px;background:#cb6565"></div>
<div class="a" style="left:0;top:0px;width:724px;height:23px;overflow:hidden">
<svg style="left:0;top:0" width="1" height="1"><path d="M115.7 7.8 L121.9 7.8 L118.80000000000001 13.2Z" fill="#6a6a6a" stroke="#454545" stroke-width=".6" stroke-linejoin="round"/></svg>
<svg style="left:0;top:0" width="1" height="1"><g transform="translate(131.20000000000002 9.2) scale(.84)"><path d="M0.3 -0.9 L5.2 -0.4 L3.6 1.1 L7.3 4.9 L5.2 6.6 L1.8 2.9 L0.6 4.2Z" fill="#6a9cd8" stroke="#1a4f98" stroke-width="1.25" stroke-linejoin="round"/></g></svg>
<div class="t" style="left:147.60px;top:3.30px;letter-spacing:0.366px;">com.dangdang.digital.test.BusyApplication$MemoryPredator.createBigObject(int)</div>
</div>
<div class="t" style="left:805.11px;top:3.30px;letter-spacing:-0.450px;">34</div>
<div class="t" style="left:871.27px;top:3.30px;letter-spacing:-0.450px;">1.93 GB</div>
<div class="t" style="left:976.31px;top:3.30px;letter-spacing:-0.450px;">99.98%</div>
<div class="a" style="left:114px;top:23px;width:916px;height:23px;background:#eeeeee"></div>
<div class="a" style="left:929px;top:23px;width:99px;height:23px;background:#cb6565"></div>
<div class="a" style="left:0;top:23px;width:724px;height:23px;overflow:hidden">
<svg style="left:0;top:0" width="1" height="1"><path d="M126.9 7.8 L133.10000000000002 7.8 L130.0 13.2Z" fill="#6a6a6a" stroke="#454545" stroke-width=".6" stroke-linejoin="round"/></svg>
<svg style="left:0;top:0" width="1" height="1"><g transform="translate(142.4 9.2) scale(.84)"><path d="M0.3 -0.9 L5.2 -0.4 L3.6 1.1 L7.3 4.9 L5.2 6.6 L1.8 2.9 L0.6 4.2Z" fill="#6a9cd8" stroke="#1a4f98" stroke-width="1.25" stroke-linejoin="round"/></g></svg>
<div class="t" style="left:158.80px;top:3.30px;letter-spacing:0.258px;">com.dangdang.digital.test.BusyApplication$MemoryPredator.access$000(BusyApplication$MemoryPredator)</div>
</div>
<div class="t" style="left:805.11px;top:26.30px;letter-spacing:-0.450px;">34</div>
<div class="t" style="left:871.27px;top:26.30px;letter-spacing:-0.450px;">1.93 GB</div>
<div class="t" style="left:976.31px;top:26.30px;letter-spacing:-0.450px;">99.98%</div>
<div class="a" style="left:929px;top:46px;width:99px;height:23px;background:#cb6565"></div>
<div class="a" style="left:0;top:46px;width:724px;height:23px;overflow:hidden">
<svg style="left:0;top:0" width="1" height="1"><g transform="translate(153.00000000000003 9.2) scale(.84)"><path d="M0.3 -0.9 L5.2 -0.4 L3.6 1.1 L7.3 4.9 L5.2 6.6 L1.8 2.9 L0.6 4.2Z" fill="#6a9cd8" stroke="#1a4f98" stroke-width="1.25" stroke-linejoin="round"/></g></svg>
<div class="t" style="left:169.40px;top:3.30px;letter-spacing:0.360px;">com.dangdang.digital.test.BusyApplication$MemoryPredator$1.run()</div>
</div>
<div class="t" style="left:805.11px;top:49.30px;letter-spacing:-0.450px;">34</div>
<div class="t" style="left:871.27px;top:49.30px;letter-spacing:-0.450px;">1.93 GB</div>
<div class="t" style="left:976.31px;top:49.30px;letter-spacing:-0.450px;">99.98%</div>
<div class="a" style="left:114px;top:69px;width:916px;height:23px;background:#eeeeee"></div>
<div class="a" style="left:0;top:69px;width:724px;height:23px;overflow:hidden">
<svg style="left:0;top:0" width="1" height="1"><path d="M115.7 6.8 L121.0 10.0 L115.7 13.2Z" fill="#6a6a6a" stroke="#454545" stroke-width=".6" stroke-linejoin="round"/></svg>
<svg style="left:0;top:0" width="1" height="1"><g transform="translate(131.20000000000002 9.2) scale(.84)"><path d="M0.3 -0.9 L5.2 -0.4 L3.6 1.1 L7.3 4.9 L5.2 6.6 L1.8 2.9 L0.6 4.2Z" fill="#6a9cd8" stroke="#1a4f98" stroke-width="1.25" stroke-linejoin="round"/></g></svg>
<div class="t" style="left:147.50px;top:3.30px;letter-spacing:0.405px;">java.io.ObjectOutputStream$BlockDataOutputStream.&lt;init&gt;(OutputStream)</div>
</div>
<div class="t" style="left:805.11px;top:72.30px;letter-spacing:-0.450px;">93</div>
<div class="t" style="left:867.55px;top:72.30px;letter-spacing:-0.450px;">94.45 kB</div>
<div class="t" style="left:984.21px;top:72.30px;letter-spacing:-0.450px;">0.00%</div>
<div class="a" style="left:0;top:92px;width:724px;height:23px;overflow:hidden">
<svg style="left:0;top:0" width="1" height="1"><path d="M115.7 6.8 L121.0 10.0 L115.7 13.2Z" fill="#6a6a6a" stroke="#454545" stroke-width=".6" stroke-linejoin="round"/></svg>
<svg style="left:0;top:0" width="1" height="1"><g transform="translate(131.20000000000002 9.2) scale(.84)"><path d="M0.3 -0.9 L5.2 -0.4 L3.6 1.1 L7.3 4.9 L5.2 6.6 L1.8 2.9 L0.6 4.2Z" fill="#6a9cd8" stroke="#1a4f98" stroke-width="1.25" stroke-linejoin="round"/></g></svg>
<div class="t" style="left:147.50px;top:3.30px;letter-spacing:0.300px;">java.io.ObjectInputStream$BlockDataInputStream.&lt;init&gt;(ObjectInputStream, InputStream)</div>
</div>
<div class="t" style="left:805.11px;top:95.30px;letter-spacing:-0.450px;">69</div>
<div class="t" style="left:867.55px;top:95.30px;letter-spacing:-0.450px;">70.08 kB</div>
<div class="t" style="left:984.21px;top:95.30px;letter-spacing:-0.450px;">0.00%</div>
<div class="a" style="left:114px;top:115px;width:916px;height:23px;background:#eeeeee"></div>
<div class="a" style="left:0;top:115px;width:724px;height:23px;overflow:hidden">
<svg style="left:0;top:0" width="1" height="1"><path d="M115.7 6.8 L121.0 10.0 L115.7 13.2Z" fill="#6a6a6a" stroke="#454545" stroke-width=".6" stroke-linejoin="round"/></svg>
<svg style="left:0;top:0" width="1" height="1"><g transform="translate(131.20000000000002 9.2) scale(.84)"><path d="M0.3 -0.9 L5.2 -0.4 L3.6 1.1 L7.3 4.9 L5.2 6.6 L1.8 2.9 L0.6 4.2Z" fill="#6a9cd8" stroke="#1a4f98" stroke-width="1.25" stroke-linejoin="round"/></g></svg>
<div class="t" style="left:147.60px;top:3.30px;letter-spacing:0.301px;">sun.reflect.ByteVectorImpl.resize(int)</div>
</div>
<div class="t" style="left:805.11px;top:118.30px;letter-spacing:-0.450px;">56</div>
<div class="t" style="left:867.55px;top:118.30px;letter-spacing:-0.450px;">59.47 kB</div>
<div class="t" style="left:984.21px;top:118.30px;letter-spacing:-0.450px;">0.00%</div>
<div class="a" style="left:0;top:138px;width:724px;height:23px;overflow:hidden">
<svg style="left:0;top:0" width="1" height="1"><path d="M115.7 6.8 L121.0 10.0 L115.7 13.2Z" fill="#6a6a6a" stroke="#454545" stroke-width=".6" stroke-linejoin="round"/></svg>
<svg style="left:0;top:0" width="1" height="1"><g transform="translate(131.20000000000002 9.2) scale(.84)"><path d="M0.3 -0.9 L5.2 -0.4 L3.6 1.1 L7.3 4.9 L5.2 6.6 L1.8 2.9 L0.6 4.2Z" fill="#6a9cd8" stroke="#1a4f98" stroke-width="1.25" stroke-linejoin="round"/></g></svg>
<div class="t" style="left:147.60px;top:3.30px;letter-spacing:0.162px;">sun.misc.Unsafe.defineClass(String, byte[], int, int, ClassLoader, ProtectionDomain)</div>
</div>
<div class="t" style="left:805.11px;top:141.30px;letter-spacing:-0.450px;">37</div>
<div class="t" style="left:867.55px;top:141.30px;letter-spacing:-0.450px;">49.12 kB</div>
<div class="t" style="left:984.21px;top:141.30px;letter-spacing:-0.450px;">0.00%</div>
<div class="a" style="left:114px;top:161px;width:916px;height:23px;background:#eeeeee"></div>
<div class="a" style="left:0;top:161px;width:724px;height:23px;overflow:hidden">
<svg style="left:0;top:0" width="1" height="1"><path d="M115.7 6.8 L121.0 10.0 L115.7 13.2Z" fill="#6a6a6a" stroke="#454545" stroke-width=".6" stroke-linejoin="round"/></svg>
<svg style="left:0;top:0" width="1" height="1"><g transform="translate(131.20000000000002 9.2) scale(.84)"><path d="M0.3 -0.9 L5.2 -0.4 L3.6 1.1 L7.3 4.9 L5.2 6.6 L1.8 2.9 L0.6 4.2Z" fill="#6a9cd8" stroke="#1a4f98" stroke-width="1.25" stroke-linejoin="round"/></g></svg>
<div class="t" style="left:147.60px;top:3.30px;letter-spacing:0.422px;">sun.reflect.ByteVectorImpl.trim()</div>
</div>
<div class="t" style="left:805.11px;top:164.30px;letter-spacing:-0.450px;">35</div>
<div class="t" style="left:867.55px;top:164.30px;letter-spacing:-0.450px;">45.95 kB</div>
<div class="t" style="left:984.21px;top:164.30px;letter-spacing:-0.450px;">0.00%</div>
<div class="a" style="left:0;top:184px;width:724px;height:23px;overflow:hidden">
<svg style="left:0;top:0" width="1" height="1"><path d="M115.7 6.8 L121.0 10.0 L115.7 13.2Z" fill="#6a6a6a" stroke="#454545" stroke-width=".6" stroke-linejoin="round"/></svg>
<svg style="left:0;top:0" width="1" height="1"><g transform="translate(131.20000000000002 9.2) scale(.84)"><path d="M0.3 -0.9 L5.2 -0.4 L3.6 1.1 L7.3 4.9 L5.2 6.6 L1.8 2.9 L0.6 4.2Z" fill="#6a9cd8" stroke="#1a4f98" stroke-width="1.25" stroke-linejoin="round"/></g></svg>
<div class="t" style="left:147.50px;top:3.30px;letter-spacing:0.293px;">java.io.DataInputStream.&lt;init&gt;(InputStream)</div>
</div>
<div class="t" style="left:805.11px;top:187.30px;letter-spacing:-0.450px;">15</div>
<div class="t" style="left:875.44px;top:187.30px;letter-spacing:-0.450px;">1.41 kB</div>
<div class="t" style="left:984.21px;top:187.30px;letter-spacing:-0.450px;">0.00%</div>
<div class="a" style="left:114px;top:207px;width:916px;height:23px;background:#eeeeee"></div>
<div class="a" style="left:0;top:207px;width:724px;height:23px;overflow:hidden">
<svg style="left:0;top:0" width="1" height="1"><path d="M115.7 6.8 L121.0 10.0 L115.7 13.2Z" fill="#6a6a6a" stroke="#454545" stroke-width=".6" stroke-linejoin="round"/></svg>
<svg style="left:0;top:0" width="1" height="1"><g transform="translate(131.20000000000002 9.2) scale(.84)"><path d="M0.3 -0.9 L5.2 -0.4 L3.6 1.1 L7.3 4.9 L5.2 6.6 L1.8 2.9 L0.6 4.2Z" fill="#6a9cd8" stroke="#1a4f98" stroke-width="1.25" stroke-linejoin="round"/></g></svg>
<div class="t" style="left:147.60px;top:3.30px;letter-spacing:0.372px;">sun.reflect.ByteVectorImpl.&lt;init&gt;(int)</div>
</div>
<div class="t" style="left:813.00px;top:210.30px;letter-spacing:-0.450px;">3</div>
<div class="t" style="left:862.65px;top:210.30px;letter-spacing:-0.450px;">360 bytes</div>
<div class="t" style="left:984.21px;top:210.30px;letter-spacing:-0.450px;">0.00%</div>
<div class="a" style="left:0;top:230px;width:724px;height:23px;overflow:hidden">
<svg style="left:0;top:0" width="1" height="1"><path d="M115.7 6.8 L121.0 10.0 L115.7 13.2Z" fill="#6a6a6a" stroke="#454545" stroke-width=".6" stroke-linejoin="round"/></svg>
<svg style="left:0;top:0" width="1" height="1"><g transform="translate(131.20000000000002 9.2) scale(.84)"><path d="M0.3 -0.9 L5.2 -0.4 L3.6 1.1 L7.3 4.9 L5.2 6.6 L1.8 2.9 L0.6 4.2Z" fill="#6a9cd8" stroke="#1a4f98" stroke-width="1.25" stroke-linejoin="round"/></g></svg>
<div class="t" style="left:147.60px;top:3.30px;letter-spacing:0.116px;">sun.reflect.UTF8.encode(String)</div>
</div>
<div class="t" style="left:813.00px;top:233.30px;letter-spacing:-0.450px;">3</div>
<div class="t" style="left:862.65px;top:233.30px;letter-spacing:-0.450px;">288 bytes</div>
<div class="t" style="left:984.21px;top:233.30px;letter-spacing:-0.450px;">0.00%</div>
</div>
<div class="a" style="left:724px;top:521px;width:1px;height:24px;background:linear-gradient(#dcdcdc,#c4c4c4)"></div>
<div class="a" style="left:724px;top:546px;width:1px;height:239px;background:repeating-linear-gradient(#222 0 1px,transparent 1px 2px)"></div>
<div class="a" style="left:826px;top:521px;width:1px;height:24px;background:linear-gradient(#dcdcdc,#c4c4c4)"></div>
<div class="a" style="left:826px;top:546px;width:1px;height:239px;background:repeating-linear-gradient(#222 0 1px,transparent 1px 2px)"></div>
<div class="a" style="left:928px;top:521px;width:1px;height:24px;background:linear-gradient(#dcdcdc,#c4c4c4)"></div>
<div class="a" style="left:928px;top:546px;width:1px;height:239px;background:repeating-linear-gradient(#222 0 1px,transparent 1px 2px)"></div>
<div class="a" style="left:1029px;top:521px;width:1px;height:24px;background:linear-gradient(#dcdcdc,#c4c4c4)"></div>
<div class="a" style="left:1030px;top:521px;width:16px;height:264.5px;background:#f4f3f2"></div>
<div class="a" style="left:1033px;top:521px;width:13px;height:264.5px;background:#fafaf9;border:1px solid #b9b5b0;border-radius:6.5px"></div>
<div class="a" style="left:1034px;top:758px;width:11px;height:14.5px;background:#e1dfdd;border-radius:0 0 5.5px 5.5px"></div>
<div class="a" style="left:1033px;top:534px;width:13px;height:225px;background:linear-gradient(90deg,#fdfdfd,#ebe9e7);border:1px solid #aaa6a1;border-radius:6.5px"></div>
<svg style="left:1033px;top:521px" width="13" height="265" viewBox="0 0 13 265"><path d="M3.8 9.8 L9.2 9.8 L6.5 6.2Z" fill="#aaa"/><path d="M3.8 256.2 L9.2 256.2 L6.5 259.8Z" fill="#555"/><path d="M5 122.5h3M5 124.5h3M5 126.5h3" stroke="#c8c4c0" stroke-width="1"/></svg>
<div class="a" style="left:96px;top:798px;width:973px;height:1px;background:#a9a39d"></div>
<div class="a" style="left:96px;top:799px;width:973px;height:20px;background:#fcf0eb"></div>
<svg style="left:0;top:0" width="1" height="1"><g transform="translate(101 801)"><g transform="translate(7.3 9) rotate(33)"><rect x="-8.2" y="-2.3" width="16.4" height="4.6" fill="#3cae3c" stroke="#1e7a26" stroke-width=".6"/><path d="M-6.6 -0.9h1.4M-4 -0.9h1.4M-6.6 1.1h1.4M-4 1.1h1.4M2.8 -0.9h1.4M5.4 -0.9h1.4M2.8 1.1h1.4M5.4 1.1h1.4" stroke="#0f3a14" stroke-width="1"/><rect x="-1.6" y="-2.9" width="3.2" height="5.8" fill="#fcf0eb"/></g><path d="M10 5.8 L5.8 10" stroke="#c46a24" stroke-width="2" stroke-linecap="round"/><circle cx="11.6" cy="3.5" r="2.9" fill="#e2e8f6" stroke="#5a5f6a" stroke-width="1"/></g></svg>
<div class="t" style="left:121.00px;top:799.40px;letter-spacing:0.131px;">Overview</div>
<div class="a" style="left:190px;top:799px;width:1px;height:20px;background:#b5aea8"></div>
<svg style="left:0;top:0" width="1" height="1"><defs><linearGradient id="g32" x1="0" x2="1"><stop offset="0" stop-color="#2a82c4"/><stop offset=".5" stop-color="#58a8de"/><stop offset="1" stop-color="#2474b4"/></linearGradient></defs><g transform="translate(195.5 800)"><path d="M1 4.6 L10.6 4.6 L9.6 14 L2 14Z" fill="url(#g32)" stroke="#1d5f9a" stroke-width=".7" stroke-linejoin="round"/><path d="M3.7 5.6 L4 12.8 M5.8 5.6 L5.8 12.8 M7.9 5.6 L7.6 12.8" stroke="#d6ecd4" stroke-width="1.25"/><rect x="0.2" y="2.6" width="11.2" height="2.1" rx=".8" fill="#3a8ccc" stroke="#1d5f9a" stroke-width=".6"/><path d="M3.8 2.6 L3.8 0.9 L7.8 0.9 L7.8 2.6" fill="none" stroke="#1d5f9a" stroke-width="1.1"/></g></svg>
<div class="t" style="left:213.00px;top:799.40px;letter-spacing:0.005px;">Garbage Collections</div>
<div class="a" style="left:353px;top:799px;width:1px;height:20px;background:#b5aea8"></div>
<svg style="left:0;top:0" width="1" height="1"><defs><linearGradient id="g33" x1="0" x2="1"><stop offset="0" stop-color="#2a82c4"/><stop offset=".5" stop-color="#58a8de"/><stop offset="1" stop-color="#2474b4"/></linearGradient></defs><g transform="translate(358 800)"><path d="M1 4.6 L10.6 4.6 L9.6 14 L2 14Z" fill="url(#g33)" stroke="#1d5f9a" stroke-width=".7" stroke-linejoin="round"/><path d="M3.7 5.6 L4 12.8 M5.8 5.6 L5.8 12.8 M7.9 5.6 L7.6 12.8" stroke="#d6ecd4" stroke-width="1.25"/><rect x="0.2" y="2.6" width="11.2" height="2.1" rx=".8" fill="#3a8ccc" stroke="#1d5f9a" stroke-width=".6"/><path d="M3.8 2.6 L3.8 0.9 L7.8 0.9 L7.8 2.6" fill="none" stroke="#1d5f9a" stroke-width="1.1"/><circle cx="11.6" cy="11.6" r="2.9" fill="#f4f8ff" stroke="#2a5aa8" stroke-width="1"/><path d="M11.6 10v1.8h1.4" stroke="#1f3f7f" stroke-width=".8" fill="none"/></g></svg>
<div class="t" style="left:377.50px;top:799.40px;letter-spacing:-0.849px;">GC Times</div>
<div class="a" style="left:443px;top:799px;width:1px;height:20px;background:#b5aea8"></div>
<svg style="left:0;top:0" width="1" height="1"><defs><linearGradient id="g34" x1="0" x2="1"><stop offset="0" stop-color="#2a82c4"/><stop offset=".5" stop-color="#58a8de"/><stop offset="1" stop-color="#2474b4"/></linearGradient></defs><g transform="translate(447.7 800)"><path d="M1 4.6 L10.6 4.6 L9.6 14 L2 14Z" fill="url(#g34)" stroke="#1d5f9a" stroke-width=".7" stroke-linejoin="round"/><path d="M3.7 5.6 L4 12.8 M5.8 5.6 L5.8 12.8 M7.9 5.6 L7.6 12.8" stroke="#d6ecd4" stroke-width="1.25"/><rect x="0.2" y="2.6" width="11.2" height="2.1" rx=".8" fill="#3a8ccc" stroke="#1d5f9a" stroke-width=".6"/><path d="M3.8 2.6 L3.8 0.9 L7.8 0.9 L7.8 2.6" fill="none" stroke="#1d5f9a" stroke-width="1.1"/><rect x="7.6" y="5.8" width="7.2" height="8.8" fill="#fdfdf6" stroke="#8a8a7a" stroke-width=".7"/><path d="M9 8.2h4.4M9 10.2h4.4M9 12.2h3" stroke="#8a8a8a" stroke-width=".8"/><path d="M13 13.4l1.8 1.2-1.8 .6Z" fill="#e8a020"/></g></svg>
<div class="t" style="left:467.80px;top:799.40px;letter-spacing:0.077px;">GC Configuration</div>
<div class="a" style="left:590px;top:797px;width:105px;height:22px;background:#fff;border:1px solid #a9a39d;border-top:none;border-radius:0 0 5px 5px"></div>
<div class="a" style="left:591px;top:797px;width:103px;height:2px;background:#fff"></div>
<svg style="left:0;top:0" width="1" height="1"><defs><radialGradient id="g35" cx=".35" cy=".3" r=".8"><stop offset="0" stop-color="#fff"/><stop offset=".6" stop-color="#dfe6f0"/><stop offset="1" stop-color="#8aa0c4"/></radialGradient></defs><circle cx="600.2" cy="811.1" r="6.6" fill="url(#g35)" stroke="#9fb0cc" stroke-width=".6"/><path d="M601.4000000000001 809.9 L596.0 803.5 A9 9 0 0 1 609.4000000000001 809.9Z" fill="#fff8f5"/><path d="M602.5 808.5 L596.4000000000001 803.7 Q601.2 800.3000000000001 605.8000000000001 802.7Z" fill="#e2101c"/><path d="M603.4000000000001 808.9 L607.8000000000001 804.7 Q609.8000000000001 806.7 609.6 808.9Z" fill="#2f9fb4"/></svg>
<div class="t" style="left:614.60px;top:799.40px;letter-spacing:0.346px;color:#000;">Allocations</div>
<svg style="left:0;top:0" width="1" height="1"><defs><radialGradient id="g36" cx=".35" cy=".35" r=".7"><stop offset="0" stop-color="#ffd070"/><stop offset="1" stop-color="#e88a10"/></radialGradient><linearGradient id="g37" x1="0" x2="1" y1="0" y2="1"><stop offset="0" stop-color="#8fc4f4"/><stop offset="1" stop-color="#2f78cc"/></linearGradient></defs><g transform="translate(698.6 800.5)"><circle cx="3.6" cy="7.2" r="3.3" fill="url(#g36)" stroke="#c87408" stroke-width=".5"/><path d="M10.2 0.4 L13.8 6.4 L6.6 6.4Z" fill="#3aa838" stroke="#1f7a24" stroke-width=".6" stroke-linejoin="round"/><rect x="7.4" y="7.2" width="7.6" height="7.6" rx="1.6" fill="url(#g37)" stroke="#2a68b8" stroke-width=".6"/></g></svg>
<div class="t" style="left:719.90px;top:799.40px;letter-spacing:0.192px;">Object Statistics</div>
<div class="a" style="left:834px;top:799px;width:1px;height:20px;background:#b5aea8"></div>
</body></html>
